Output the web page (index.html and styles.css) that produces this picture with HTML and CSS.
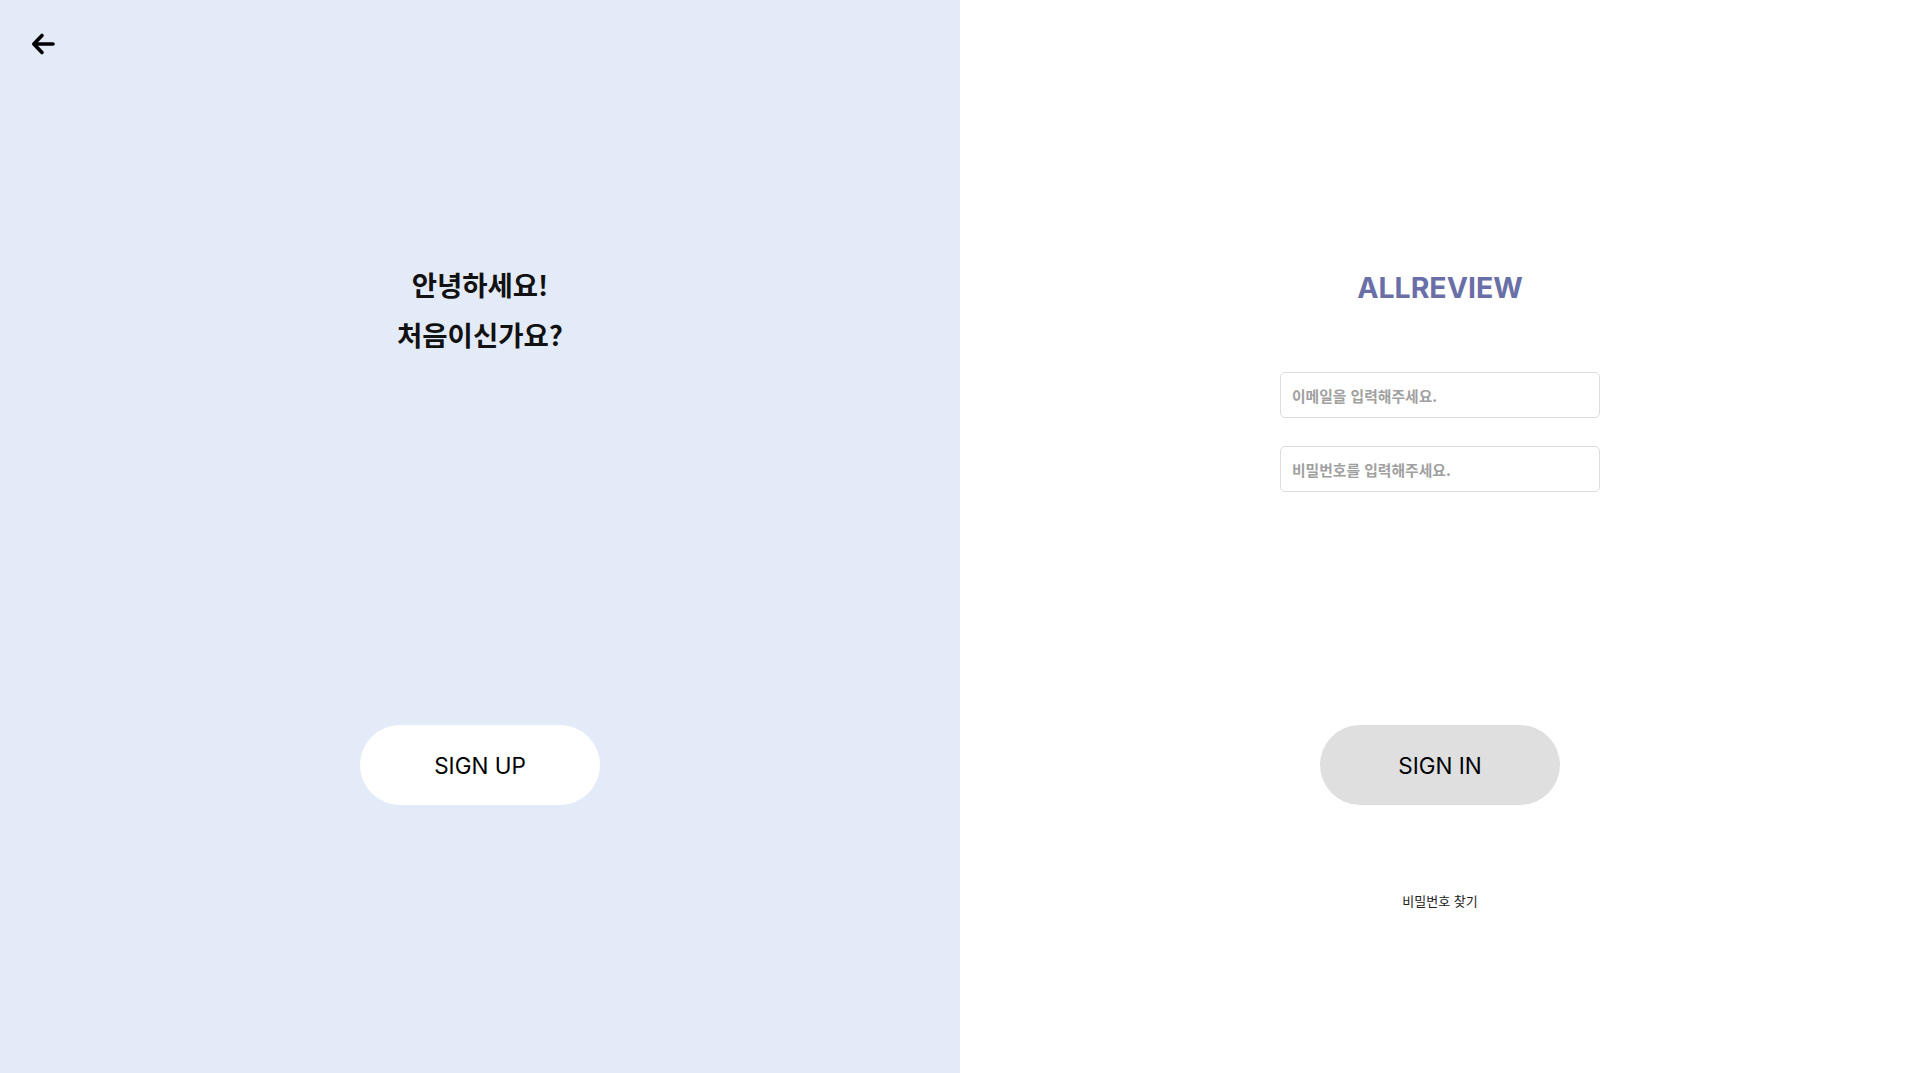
FILE: index.html
```html
<!DOCTYPE html>
<html lang="ko">
<head>
<meta charset="utf-8">
<title>ALLREVIEW</title>
<link rel="stylesheet" href="styles.css">
</head>
<body>
<div class="page">
  <section class="panel panel-left">
    <button class="back" aria-label="back">
      <svg width="24" height="24" viewBox="0 0 24 24"><path d="M22 12H3M11 3.5L2.8 12L11 20.5" fill="none" stroke="#000" stroke-width="3.6" stroke-linecap="round" stroke-linejoin="round"/></svg>
    </button>
    <h2 class="greeting">안녕하세요!<br>처음이신가요?</h2>
    <button class="pill pill-white">SIGN UP</button>
  </section>
  <section class="panel panel-right">
    <h1 class="logo">ALLREVIEW</h1>
    <input class="field field-first" type="text" placeholder="이메일을 입력해주세요.">
    <input class="field field-second" type="password" placeholder="비밀번호를 입력해주세요.">
    <button class="pill pill-gray">SIGN IN</button>
    <a class="find" href="#">비밀번호 찾기</a>
  </section>
</div>
</body>
</html>
```
FILE: styles.css
```css
html, body {
  margin: 0;
  padding: 0;
}
body {
  font-family: Inter, "Noto Sans CJK KR", sans-serif;
  color: #111;
}
.page {
  display: flex;
  width: 100%;
  height: 100vh;
}
.panel {
  flex: 1 1 0;
  display: flex;
  flex-direction: column;
  align-items: center;
}
.panel-left {
  background: #e3eaf8;
}
.panel-right {
  background: #ffffff;
}
.back {
  align-self: flex-start;
  margin: 32px 0 0 31px;
  padding: 0;
  border: 0;
  background: none;
  width: 24px;
  height: 24px;
  display: flex;
  cursor: pointer;
}
.greeting {
  margin: 203px 0 0 0;
  font-family: "Noto Sans CJK KR", sans-serif;
  font-weight: 600;
  font-size: 27.5px;
  line-height: 50px;
  text-align: center;
  color: #111;
}
.pill {
  width: 240px;
  height: 80px;
  border: 0;
  border-radius: 40px;
  font-family: Inter, "Noto Sans CJK KR", sans-serif;
  font-size: 22.5px;
  font-weight: 400;
  color: #000;
  cursor: pointer;
  padding: 0;
}
.pill-white {
  margin-top: 366px;
  background: #ffffff;
}
.pill-gray {
  margin-top: 233px;
  background: #dfdfdf;
}
.logo {
  margin: 270px 0 0 0;
  font-family: Inter, sans-serif;
  font-weight: 700;
  font-size: 28.5px;
  line-height: 36px;
  color: #6a6fa8;
  letter-spacing: 0;
}
.field {
  box-sizing: border-box;
  width: 320px;
  height: 46px;
  border: 1px solid #dcdcdc;
  border-radius: 5px;
  padding: 0 11px;
  font-family: "Noto Sans CJK KR", sans-serif;
  font-size: 14.8px;
  font-weight: 500;
  color: #333;
  outline: none;
  background: #fff;
}
.field::placeholder {
  color: #a0a0a0;
  font-weight: 600;
}
.field-first {
  margin-top: 66px;
}
.field-second {
  margin-top: 28px;
}
.find {
  margin-top: 87px;
  font-family: "Noto Sans CJK KR", sans-serif;
  font-size: 13px;
  line-height: 18px;
  color: #222;
  text-decoration: none;
}
```
